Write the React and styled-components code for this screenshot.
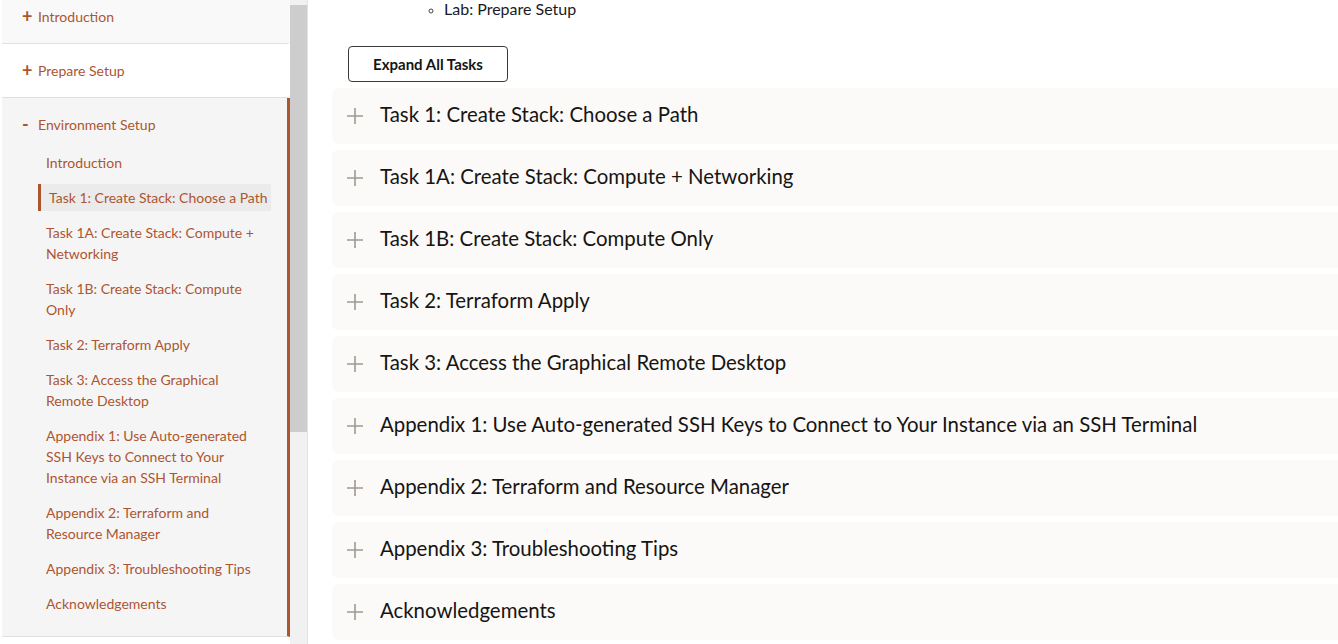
import React from "react";
import styled, { createGlobalStyle } from "styled-components";

const GlobalStyle = createGlobalStyle`
  html, body {
    margin: 0;
    padding: 0;
    height: 644px;
    overflow: hidden;
    background: #ffffff;
    font-family: Lato, "Noto Sans", sans-serif;
  }
`;

const sections = [
  { title: "Introduction", open: false, bg: "#f9f9f9" },
  { title: "Prepare Setup", open: false, bg: "#ffffff" },
  { title: "Environment Setup", open: true, bg: "#f5f5f5" },
];

const envItems = [
  "Introduction",
  "Task 1: Create Stack: Choose a Path",
  "Task 1A: Create Stack: Compute + Networking",
  "Task 1B: Create Stack: Compute Only",
  "Task 2: Terraform Apply",
  "Task 3: Access the Graphical Remote Desktop",
  "Appendix 1: Use Auto-generated SSH Keys to Connect to Your Instance via an SSH Terminal",
  "Appendix 2: Terraform and Resource Manager",
  "Appendix 3: Troubleshooting Tips",
  "Acknowledgements",
];

const tasks = [
  "Task 1: Create Stack: Choose a Path",
  "Task 1A: Create Stack: Compute + Networking",
  "Task 1B: Create Stack: Compute Only",
  "Task 2: Terraform Apply",
  "Task 3: Access the Graphical Remote Desktop",
  "Appendix 1: Use Auto-generated SSH Keys to Connect to Your Instance via an SSH Terminal",
  "Appendix 2: Terraform and Resource Manager",
  "Appendix 3: Troubleshooting Tips",
  "Acknowledgements",
];

const Page = () => {
  return (
    <Layout>
      <GlobalStyle />
      <Sidebar>
        <SectionList>
          {sections.map((s) => (
            <Section key={s.title} $bg={s.bg} $open={s.open}>
              <SectionHeader $open={s.open}>
                <Toggle>{s.open ? "-" : "+"}</Toggle>
                {s.title}
              </SectionHeader>
              {s.open && (
                <SubList>
                  {envItems.map((item, i) => (
                    <SubItem key={item} $active={i === 1}>
                      {item}
                    </SubItem>
                  ))}
                </SubList>
              )}
            </Section>
          ))}
        </SectionList>
      </Sidebar>
      <Scrollbar>
        <ScrollArrow />
        <ScrollThumb />
      </Scrollbar>
      <Main>
        <LabList>
          <li>Lab: Prepare Setup</li>
        </LabList>
        <ExpandButton>Expand All Tasks</ExpandButton>
        <Accordion>
          {tasks.map((t) => (
            <TaskRow key={t}>
              <PlusIcon width="16" height="16" viewBox="0 0 16 16">
                <path d="M8 0v16M0 8h16" stroke="#9f9a94" strokeWidth="1.6" />
              </PlusIcon>
              <TaskTitle>{t}</TaskTitle>
            </TaskRow>
          ))}
        </Accordion>
      </Main>
    </Layout>
  );
};

const Layout = styled.div`
  display: flex;
  height: 644px;
  overflow: hidden;
`;

const Sidebar = styled.aside`
  width: 290px;
  flex-shrink: 0;
  overflow: hidden;
  border-left: 2px solid #ffffff;
  box-sizing: border-box;
`;

const SectionList = styled.div`
  margin-top: -10px;
`;

const Section = styled.div`
  background: ${(p) => p.$bg};
  border-bottom: 1px solid #e0e0e0;
  border-right: 3px solid ${(p) => (p.$open ? "#ad5531" : "transparent")};
  padding-bottom: ${(p) => (p.$open ? "15px" : "0")};
`;

const SectionHeader = styled.div`
  display: flex;
  align-items: center;
  padding: 16px 0 ${(p) => (p.$open ? "10px" : "16px")} 20px;
  font-size: 14px;
  line-height: 21px;
  color: #ad5531;
`;

const Toggle = styled.span`
  width: 16px;
  font-size: 18px;
  font-weight: 700;
  line-height: 21px;
`;

const SubList = styled.ul`
  display: flex;
  flex-direction: column;
  gap: 8px;
  list-style: none;
  margin: 0;
  padding: 4px 16px 4px 36px;
`;

const SubItem = styled.li`
  padding: 3px ${(p) => (p.$active ? "0" : "8px")} 3px 8px;
  font-size: 14px;
  line-height: 21px;
  color: #ad5531;
  background: ${(p) => (p.$active ? "#ebebeb" : "transparent")};
  border-left: ${(p) => (p.$active ? "3px solid #ad5531" : "0")};
`;

const Scrollbar = styled.div`
  width: 17px;
  flex-shrink: 0;
  display: flex;
  flex-direction: column;
  background: #f1f1f1;
  border-right: 1px solid #dde3ea;
`;

const ScrollArrow = styled.div`
  height: 5px;
  background: #f1f1f1;
`;

const ScrollThumb = styled.div`
  height: 427px;
  background: #cdcdcd;
`;

const Main = styled.main`
  flex: 1;
  min-width: 0;
  padding-left: 24px;
  color: #161513;
`;

const LabList = styled.ul`
  list-style: circle;
  margin: 0;
  padding-left: 112px;
  font-size: 16px;
  line-height: 17px;
  color: #1a1a24;

  li::marker {
    font-size: 13px;
    color: #444;
  }
`;

const ExpandButton = styled.button`
  display: block;
  margin: 29px 0 6px 16px;
  width: 160px;
  height: 36px;
  border: 1px solid #3a3a3a;
  border-radius: 4px;
  background: #ffffff;
  font-family: Lato, "Noto Sans", sans-serif;
  font-size: 15px;
  font-weight: 700;
  color: #161513;
`;

const Accordion = styled.div`
  display: flex;
  flex-direction: column;
  gap: 6px;
`;

const TaskRow = styled.div`
  display: flex;
  align-items: center;
  height: 56px;
  box-sizing: border-box;
  padding: 0 0 4px 15px;
  background: #fbfaf8;
  border-radius: 6px 0 0 6px;
`;

const PlusIcon = styled.svg`
  flex-shrink: 0;
  margin: 4px 17px 0 0;
`;

const TaskTitle = styled.span`
  font-size: 20.4px;
  color: #161513;
  white-space: nowrap;
`;

export default Page;
